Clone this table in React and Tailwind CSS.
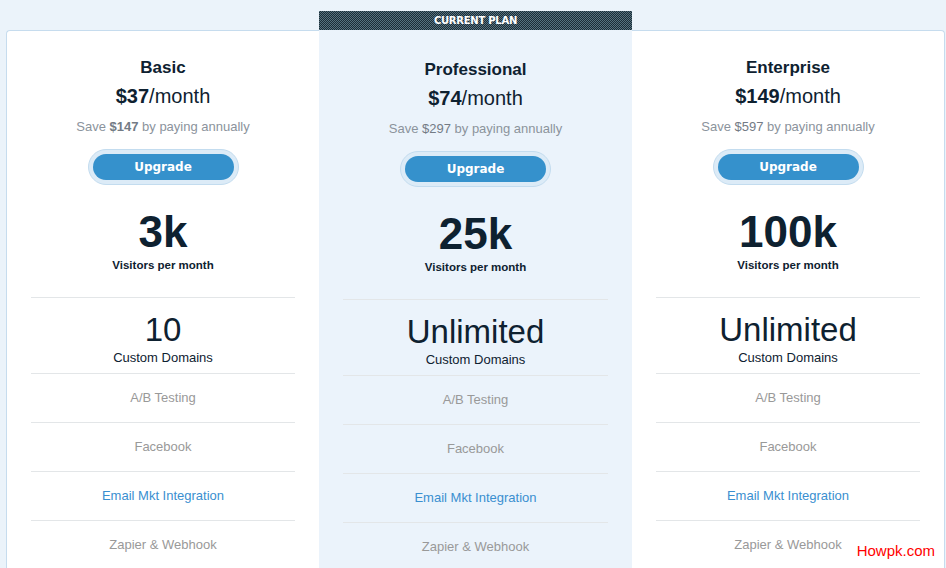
const plans = [
  { name: 'Basic', price: '$37', save: '$147', saveBold: true, visitors: '3k', domains: '10' },
  { name: 'Professional', price: '$74', save: '$297', visitors: '25k', domains: 'Unlimited', current: true },
  { name: 'Enterprise', price: '$149', save: '$597', visitors: '100k', domains: 'Unlimited' },
]

const features = [
  { label: 'A/B Testing' },
  { label: 'Facebook' },
  { label: 'Email Mkt Integration', link: true },
  { label: 'Zapier & Webhook' },
]

const PlanBody = ({ plan }) => (
  <div className="flex flex-col items-center">
    {/* Heading */}
    <div className="text-[17px] leading-[20px] font-bold text-[#0e2130]">{plan.name}</div>
    <div className="mt-[6px] text-[20px] leading-[24px] text-[#0e2130]">
      <span className="font-bold">{plan.price}</span>/month
    </div>
    <div className="mt-[11px] text-[13px] leading-[16px] text-[#8b939c]">
      Save{' '}
      <span className={plan.saveBold ? 'font-bold text-[#737b85]' : 'text-[#737b85]'}>{plan.save}</span>{' '}
      by paying annually
    </div>

    {/* Upgrade */}
    <div className="mt-[14px] w-[151px] h-[36px] rounded-full bg-[#dcebf7] border border-[#c3dcef] p-[4px]">
      <button className="w-full h-full rounded-full bg-[#3591cc] text-white text-[12px] font-bold font-['DejaVu_Sans',sans-serif]">
        Upgrade
      </button>
    </div>

    {/* Visitors */}
    <div className="mt-[23px] text-[44px] leading-[48px] font-bold text-[#0e2130]">{plan.visitors}</div>
    <div className="mt-[2px] text-[11.5px] leading-[14px] font-bold text-[#0e2130]">Visitors per month</div>

    {/* Features */}
    <div className="mt-[25px] w-full px-[24px]">
      <div className="border-t border-[#e3e6e8] pt-[12px] pb-[7px] flex flex-col items-center">
        <div className="text-[33px] leading-[40px] text-[#0e2130]">{plan.domains}</div>
        <div className="text-[13px] leading-[16px] text-[#0e2130]">Custom Domains</div>
      </div>
      {features.map((f) => (
        <div
          key={f.label}
          className={`border-t border-[#e3e6e8] h-[49px] flex items-center justify-center text-[13px] ${
            f.link ? 'text-[#3a8fd0]' : 'text-[#999999]'
          }`}
        >
          {f.label}
        </div>
      ))}
    </div>
  </div>
)

export default function App() {
  return (
    <div className="relative h-[568px] overflow-hidden bg-[#ebf3fa] pt-[11px] pl-[6px] font-['Liberation_Sans',Arial,sans-serif]">
      <div className="flex items-stretch h-full">
        {/* Basic */}
        <div className="w-[313px] mt-[19px] bg-white border-t border-l border-[#c6dcee] rounded-tl-[4px] pt-[27px]">
          <PlanBody plan={plans[0]} />
        </div>

        {/* Professional (current) */}
        <div className="w-[313px] bg-[#ebf3fb]">
          <div className="h-[19px] flex items-center justify-center bg-[repeating-conic-gradient(#1c2c36_0_25%,#55727f_0_50%)] bg-[length:2px_2px]">
            <span className="text-[10px] font-bold text-white tracking-tight font-['DejaVu_Sans',sans-serif]">
              CURRENT PLAN
            </span>
          </div>
          <div className="pt-[30px]">
            <PlanBody plan={plans[1]} />
          </div>
        </div>

        {/* Enterprise */}
        <div className="w-[313px] mt-[19px] bg-white border-t border-r border-[#c6dcee] rounded-tr-[4px] pt-[27px]">
          <PlanBody plan={plans[2]} />
        </div>
      </div>

      {/* watermark */}
      <div className="absolute right-[11px] bottom-[6px] text-[15px] text-[#ff0000]">Howpk.com</div>
    </div>
  )
}
